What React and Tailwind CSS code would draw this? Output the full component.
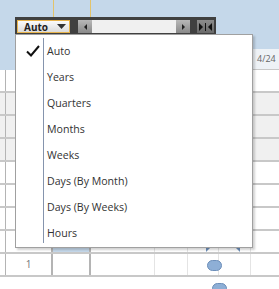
import React from "react";

const rowsFill = ["bg-white", "bg-[#f0f0f0]", "bg-[#f0f0f0]", "bg-[#f0f0f0]", "bg-white", "bg-white", "bg-white", "bg-white", "bg-white"];

function Row({ fill, selected }) {
  return (
    <div className={`flex h-[23px] border-b-2 border-[#c8c8c8] ${fill}`}>
      <div className="w-[6px] border-r border-[#b4b4b4]" />
      <div className="w-[47px] border-r-2 border-[#b4b4b4] flex items-center justify-center text-[10px] text-[#777]">1</div>
      <div className={`w-[38px] border-r-2 border-[#b4b4b4] ${selected ? "bg-[#c5d8ea]" : ""}`} />
      <div className="flex flex-1">
        <div className="w-[64px] border-r border-[#e4e4e4]" />
        <div className="w-[33px] border-r border-[#e4e4e4]" />
        <div className="w-[31px] border-r border-[#e4e4e4]" />
        <div className="w-[32px] border-r border-[#e4e4e4]" />
        <div className="flex-1" />
      </div>
    </div>
  );
}

const items = ["Auto", "Years", "Quarters", "Months", "Weeks", "Days (By Month)", "Days (By Weeks)", "Hours"];

export default function App() {
  return (
    <div className="relative w-[279px] h-[289px] overflow-hidden bg-white" style={{ fontFamily: '"Open Sans", "Noto Sans", sans-serif' }}>
      {/* header */}
      <div className="flex h-[70px]">
        <div className="w-[53px] bg-[#c5d8ea]" />
        <div className="w-[38px] bg-[#c5d8ea] border-x border-[#e3c36a]" />
        <div className="flex flex-1 flex-col">
          <div className="h-[49px] bg-[#c5d8ea]" />
          <div className="flex h-[21px] bg-[#eef2f6] border-b border-[#c8c8c8]">
            <div className="w-[162px]" />
            <div className="flex-1 pl-[4px] pb-[2px] text-[9px] text-[#666] leading-none flex items-center">4/24</div>
          </div>
        </div>
      </div>
      {/* grid rows */}
      <div className="flex flex-col">
        {rowsFill.map((f, i) => (
          <Row key={i} fill={f} selected={i === 7} />
        ))}
      </div>

      {/* gantt milestones */}
      <div className="absolute left-[207px] top-[260px] w-[15px] h-[11px] rounded-full bg-[#8eafd6] border border-[#6d8fba]" />
      <div className="absolute left-[212px] top-[283px] w-[15px] h-[11px] rounded-full bg-[#8eafd6] border border-[#6d8fba]" />
      <svg className="absolute left-[206px] top-[247px]" width="5" height="5" viewBox="0 0 5 5">
        <polygon points="0,0 5,0 0,5" fill="#6d8fba" />
      </svg>
      <svg className="absolute left-[235px] top-[247px]" width="5" height="5" viewBox="0 0 5 5">
        <polygon points="0,0 5,0 5,5" fill="#6d8fba" />
      </svg>

      {/* toolbar */}
      <div className="absolute left-[15px] top-[17px] w-[201px] h-[17px] bg-[#404040] flex items-stretch pt-[3px] pb-[1px] pl-[2px] pr-[2px]">
        <div className="w-[53px] flex items-center justify-between border border-[#e8b44c] bg-gradient-to-b from-[#fbfbfb] to-[#dcdcdc] pl-[6px] pr-[3px]">
          <span className="text-[10px] font-bold text-[#222] leading-none">Auto</span>
          <svg width="9" height="5" viewBox="0 0 9 5"><polygon points="0,0 9,0 4.5,5" fill="#333" /></svg>
        </div>
        <div className="w-[8px]" />
        <div className="w-[14px] bg-gradient-to-b from-[#b8b8b8] to-[#8a8a8a] flex items-center justify-center">
          <svg width="3" height="6" viewBox="0 0 3 6"><polygon points="3,0 3,6 0,3" fill="#222" /></svg>
        </div>
        <div className="w-[84px] bg-[#f0f0f0]" />
        <div className="w-[14px] bg-gradient-to-b from-[#b8b8b8] to-[#8a8a8a] flex items-center justify-center">
          <svg width="3" height="6" viewBox="0 0 3 6"><polygon points="0,0 0,6 3,3" fill="#222" /></svg>
        </div>
        <div className="w-[7px]" />
        <div className="w-[17px] bg-gradient-to-b from-[#8c8c8c] to-[#6a6a6a] flex items-center justify-center">
          <svg width="13" height="8" viewBox="0 0 13 8">
            <polygon points="0,0 0,8 4,4" fill="#111" />
            <rect x="6" y="0" width="1" height="8" fill="#111" />
            <polygon points="13,0 13,8 9,4" fill="#111" />
          </svg>
        </div>
      </div>

      {/* dropdown menu */}
      <div className="absolute left-[15px] top-[34px] w-[238px] h-[214px] bg-white border border-[#a0a0a0] shadow-[2px_2px_2px_rgba(0,0,0,0.18)] pt-[3px]">
        <div className="absolute left-[27px] top-[3px] bottom-[4px] w-px bg-[#8594ad]" />
        {items.map((t, i) => (
          <div key={t} className="flex items-center h-[26px]">
            <div className="w-[31px] flex items-center justify-center pl-[2px]">
              {i === 0 && (
                <svg width="14" height="12" viewBox="0 0 14 12">
                  <path d="M1 6.5 L5 10.5 L13 1" fill="none" stroke="#111" strokeWidth="2" />
                </svg>
              )}
            </div>
            <span className="text-[10.6px] text-[#333] leading-none">{t}</span>
          </div>
        ))}
      </div>
    </div>
  );
}
